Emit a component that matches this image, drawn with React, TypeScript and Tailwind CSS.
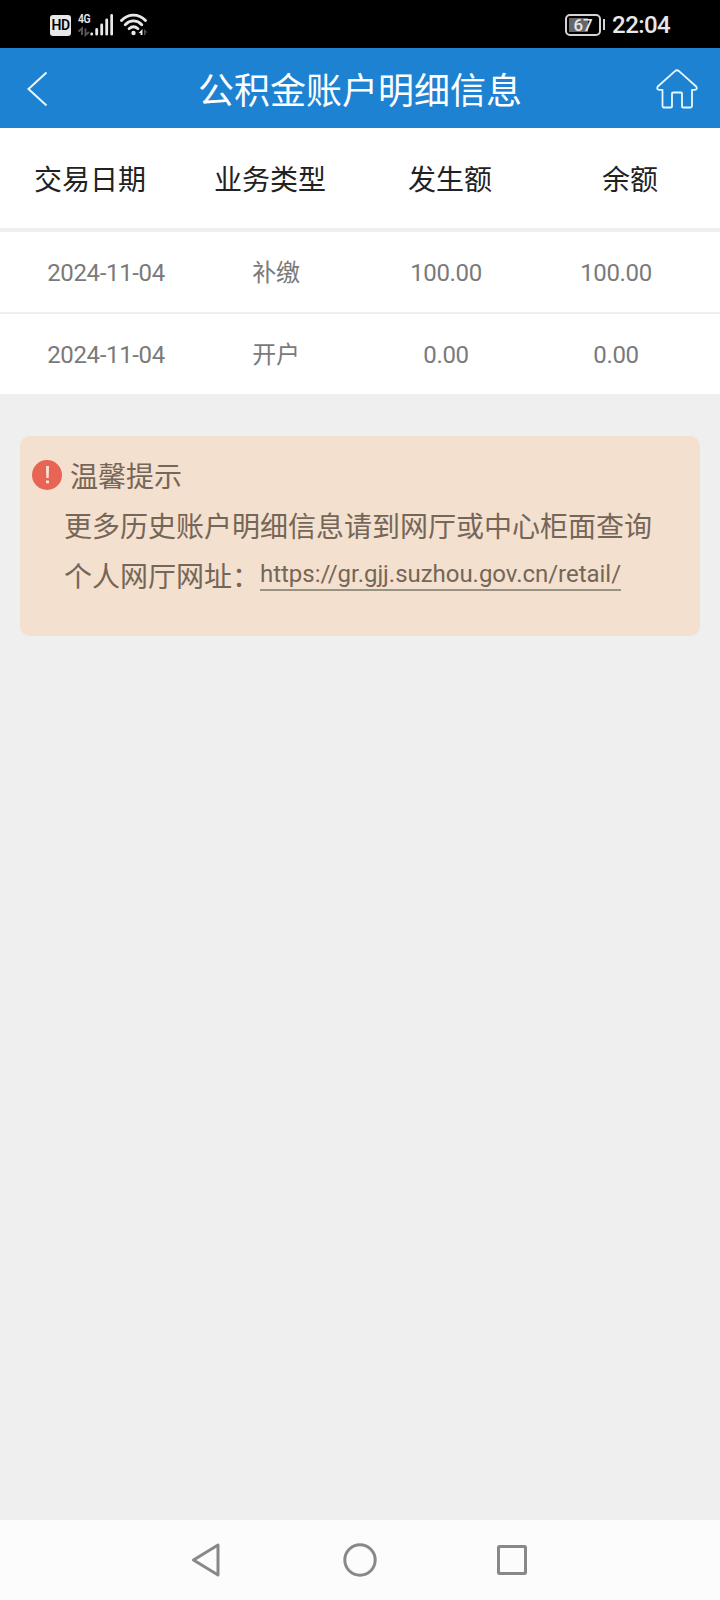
const columns = ['交易日期', '业务类型', '发生额', '余额'];

const rows = [
	['2024-11-04', '补缴', '100.00', '100.00'],
	['2024-11-04', '开户', '0.00', '0.00'],
];

function StatusBar() {
	return (
		<div className="h-12 bg-black flex items-center justify-between pl-[50px] pr-[50px] text-[#e8e8e8]">
			<div className="flex items-center">
				<div className="w-[21px] h-[21px] mt-0.5 rounded-[3px] bg-[#e8e8e8] text-black text-[14px] tracking-[-0.5px] font-semibold flex items-center justify-center">
					HD
				</div>
				<div className="w-9 h-6 ml-1.5 mt-px relative">
					<div className="absolute left-[1px] top-0 text-[13px] leading-3 tracking-[-0.5px] font-semibold origin-left scale-x-80">
						4G
					</div>
					<svg className="absolute inset-0" width="36" height="24" viewBox="0 0 36 24" fill="none">
						<path d="M5 22V15.500L1.500 18.500M8.500 15.500V22L12 19" stroke="#555" strokeWidth="2" />
						<path
							d="M14.700 21v.2M19.700 16.500v4.700M24.700 12v9.200M29.700 7v14.200M34.700 2.500v18.700"
							stroke="#e8e8e8"
							strokeWidth="2.800"
							strokeLinecap="round"
						/>
					</svg>
				</div>
				<svg className="ml-[7px] mt-px" width="28" height="24" viewBox="0 0 28 24" fill="none">
					<g stroke="#e8e8e8" strokeWidth="2.800" strokeLinecap="round">
						<path d="M1.500 7.500C8.500 0.300 18.500 0.300 25.500 7.500" />
						<path d="M5.200 11.700C10.200 6.700 16.800 6.700 21.800 11.700" />
						<path d="M9 15.700C12 13.100 15 13.100 18 15.700" />
					</g>
					<circle cx="13.500" cy="20" r="2.200" fill="#e8e8e8" />
					<path d="M22.500 22V16L18.500 20H20.500V22Z" fill="#e8e8e8" />
					<path d="M24 22V16L27.500 19.500H25.500V22Z" fill="#555" />
				</svg>
			</div>
			<div className="flex items-center">
				<div className="w-9 h-[22px] mt-px border-2 border-[#d4d4d4] rounded-[5px] p-0.5 flex">
					<div className="flex-1 bg-linear-to-r from-[#666] from-67% to-black to-67% text-[17px] leading-[14px] font-medium flex items-center justify-center">
						67
					</div>
				</div>
				<div className="w-0.5 h-[11px] ml-0.5 mt-px bg-[#d4d4d4]" />
				<div className="ml-[7px] mt-0.5 text-[24px] leading-7 tracking-[-0.6px] font-medium">22:04</div>
			</div>
		</div>
	);
}

function Header() {
	return (
		<div className="h-20 bg-[#1e82d2] flex items-center justify-between pl-[27px] pr-[22px] text-white">
			<svg className="mt-0.5" width="37" height="36" viewBox="0 0 37 36" fill="none">
				<path d="M19.500 1.500L1.500 18L19.500 34.500" stroke="#e8f8ff" strokeWidth="2" />
			</svg>
			<div className="pt-[7px] text-[36px] leading-10">公积金账户明细信息</div>
			<svg className="mt-0.5" width="42" height="40" viewBox="0 0 42 40" fill="none">
				<path
					d="M19 2.200Q21 0.400 23 2.200L40.200 17.500Q42 20.500 38.500 20.800H36V37Q36 38.500 34.500 38.500H27Q26 38.500 26 37.500V24.500Q26 23.500 25 23.500H17Q16 23.500 16 24.500V37.500Q16 38.500 15 38.500H7.500Q6.500 38.500 6.500 37V20.800H3.500Q0 20.500 1.800 17.500Z"
					stroke="#e8f8ff"
					strokeWidth="1.800"
					strokeLinejoin="round"
				/>
			</svg>
		</div>
	);
}

function DetailTable() {
	return (
		<div className="bg-white">
			<div className="h-[104px] pt-1.5 border-b-4 border-[#eee] grid grid-cols-4 items-center text-center text-[28px] leading-10 text-[#222]">
				{columns.map((name) => (
					<div key={name}>{name}</div>
				))}
			</div>
			<div className="divide-y-2 divide-[#eee]">
				{rows.map((row, i) => (
					<div key={i} className="pl-[21px] pr-[19px] text-[24px] tracking-[-0.35px] text-[#7a7a7a]">
						<div className="h-20 pt-0.5 grid grid-cols-4 items-center text-center">
							{row.map((cell, j) => (
								<div key={j}>{cell}</div>
							))}
						</div>
					</div>
				))}
			</div>
		</div>
	);
}

function Notice() {
	return (
		<div className="mt-[42px] mx-5 h-[200px] rounded-[10px] bg-[#f4e0ce] pt-[17px] pl-3 text-[28px] leading-[50px] text-[#746658]">
			<div className="flex items-center gap-2">
				<svg className="-mt-1.5" width="30" height="30" viewBox="0 0 30 30">
					<circle cx="15" cy="15" r="15" fill="#e86454" />
					<path d="M14 6H17L16.700 18H14.300ZM14 20.500H17V23.200H14Z" fill="#f8e4d8" />
				</svg>
				<div>温馨提示</div>
			</div>
			<div className="pl-8">更多历史账户明细信息请到网厅或中心柜面查询</div>
			<div className="pl-8 flex">
				<div>个人网厅网址：</div>
				<a className="h-[31px] mt-[7px] border-b-2 border-[#999184] text-[24px] leading-[28px] tracking-[-0.03px]">
					https://gr.gjj.suzhou.gov.cn/retail/
				</a>
			</div>
		</div>
	);
}

function NavigationBar() {
	return (
		<div className="h-20 bg-[#fcfcfc] flex items-center justify-center gap-[118px]">
			<svg width="34" height="34" viewBox="0 0 34 34" fill="none">
				<path d="M27 2V32L2.500 17Z" stroke="#888" strokeWidth="3" strokeLinejoin="round" />
			</svg>
			<svg width="34" height="34" viewBox="0 0 34 34" fill="none">
				<circle cx="17" cy="17" r="15.200" stroke="#888" strokeWidth="3" />
			</svg>
			<svg width="34" height="34" viewBox="0 0 34 34" fill="none">
				<rect x="3.500" y="3.500" width="27" height="27" rx="1" stroke="#888" strokeWidth="3" />
			</svg>
		</div>
	);
}

function App() {
	return (
		<div className="w-[720px] h-[1600px] bg-[#efefef] flex flex-col font-['Roboto','Noto_Sans_CJK_SC',sans-serif]">
			<StatusBar />
			<Header />
			<DetailTable />
			<div className="flex-1">
				<Notice />
			</div>
			<NavigationBar />
		</div>
	);
}
export default App;
